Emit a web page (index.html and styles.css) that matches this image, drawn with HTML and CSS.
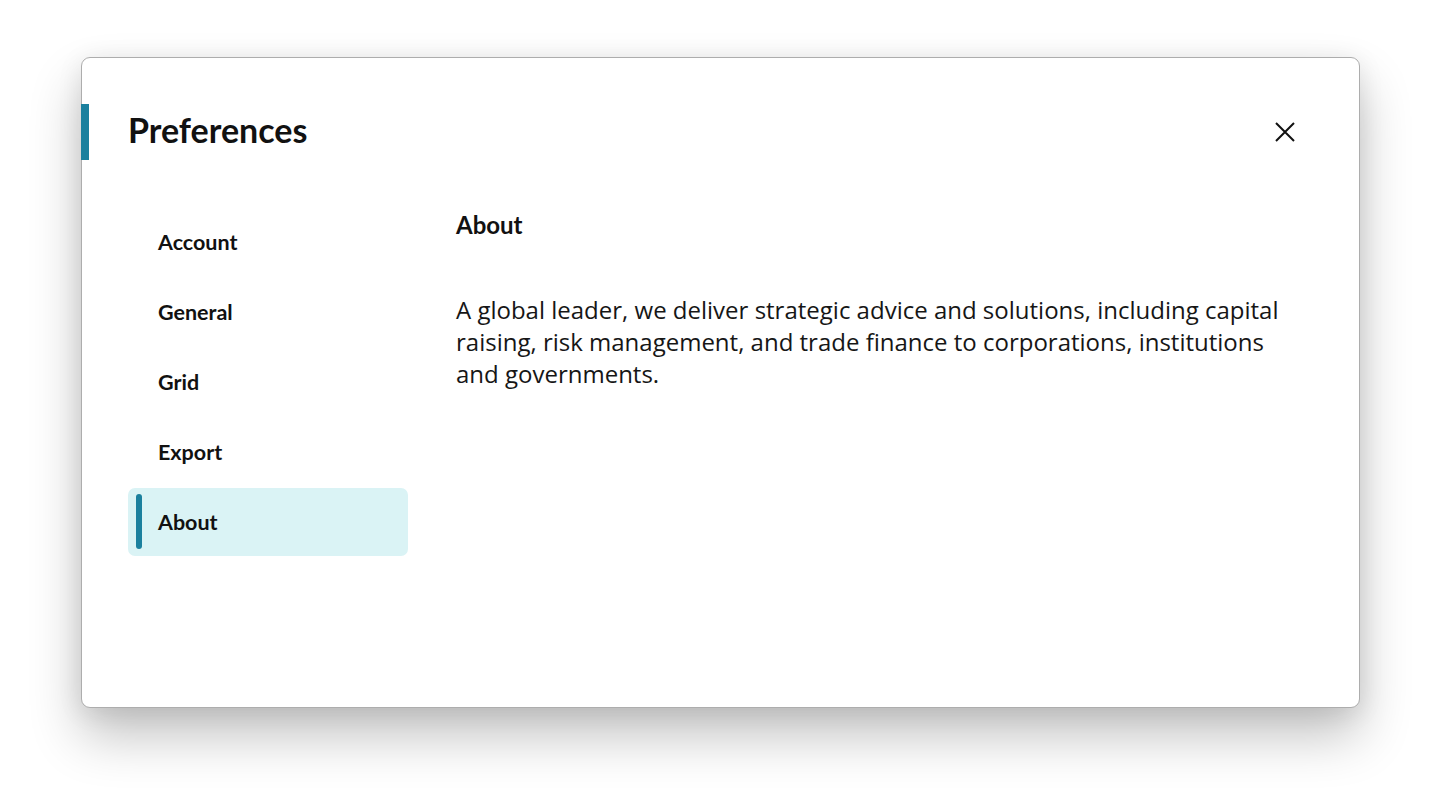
FILE: index.html
```html
<!DOCTYPE html>
<html lang="en">
<head>
<meta charset="utf-8">
<title>Preferences</title>
<link rel="stylesheet" href="styles.css">
</head>
<body>
<div class="dialog">
  <header class="dialog-header">
    <h1 class="dialog-title">Preferences</h1>
    <button class="close-btn" aria-label="Close">
      <svg width="24" height="24" viewBox="0 0 24 24"><path d="M3 3 L21 21 M21 3 L3 21" stroke="#111" stroke-width="2" fill="none"/></svg>
    </button>
  </header>
  <div class="dialog-body">
    <nav class="nav">
      <div class="nav-item">Account</div>
      <div class="nav-item">General</div>
      <div class="nav-item">Grid</div>
      <div class="nav-item">Export</div>
      <div class="nav-item active">About</div>
    </nav>
    <section class="content">
      <h2 class="content-title">About</h2>
      <p class="content-text">A global leader, we deliver strategic advice and solutions, including capital raising, risk management, and trade finance to corporations, institutions and governments.</p>
    </section>
  </div>
</div>
</body>
</html>
```
FILE: styles.css
```css
html, body {
  margin: 0;
  padding: 0;
  background: #ffffff;
}
body {
  width: 1440px;
  height: 812px;
  overflow: hidden;
  font-family: "Open Sans", sans-serif;
  color: #161616;
}
.dialog {
  position: relative;
  box-sizing: border-box;
  margin: 57px 0 0 81px;
  width: 1279px;
  height: 651px;
  background: #fff;
  border: 1px solid #adadad;
  border-radius: 9px;
  box-shadow: 0 28px 52px rgba(0, 0, 0, 0.24), 0 4px 26px rgba(0, 0, 0, 0.09);
  padding: 46px 62px 0 46px;
}
.dialog-header {
  position: relative;
  height: 56px;
  display: flex;
  align-items: center;
  justify-content: space-between;
}
.dialog-header::before {
  content: "";
  position: absolute;
  left: -47px;
  top: 0;
  width: 8px;
  height: 56px;
  background: #1b809e;
}
.dialog-title {
  margin: -4px 0 0;
  font-family: Lato, sans-serif;
  font-weight: 700;
  font-size: 34px;
  line-height: 40px;
  color: #111;
}
.close-btn {
  border: 0;
  background: none;
  padding: 0;
  width: 24px;
  height: 24px;
  display: flex;
  cursor: pointer;
}
.dialog-body {
  display: flex;
  gap: 48px;
  margin-top: 48px;
}
.nav {
  width: 280px;
  display: flex;
  flex-direction: column;
  gap: 2px;
}
.nav-item {
  position: relative;
  height: 68px;
  display: flex;
  align-items: center;
  padding: 0 0 0 30px;
  box-sizing: border-box;
  border-radius: 7px;
  font-family: Lato, sans-serif;
  font-weight: 700;
  font-size: 21.5px;
  color: #111;
}
.nav-item.active {
  background: #daf3f5;
}
.nav-item.active::before {
  content: "";
  position: absolute;
  left: 8px;
  top: 6px;
  bottom: 7px;
  width: 6px;
  border-radius: 3px;
  background: #1b809e;
}
.content {
  flex: 1;
}
.content-title {
  margin: 0;
  font-family: Lato, sans-serif;
  font-weight: 700;
  font-size: 24px;
  line-height: 34px;
  color: #111;
}
.content-text {
  margin: 52px 0 0;
  font-size: 24px;
  line-height: 32px;
  max-width: 840px;
}
```
